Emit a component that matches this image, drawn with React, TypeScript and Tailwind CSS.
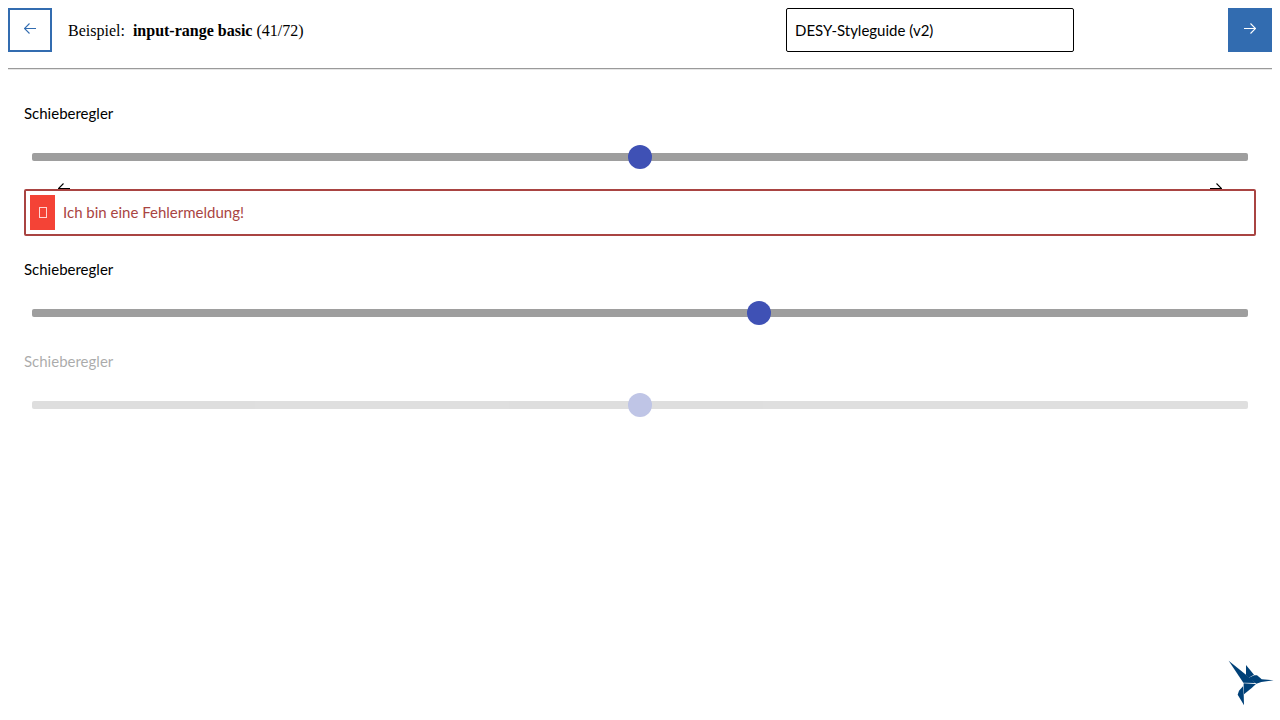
import { useId, useState } from "react";

function ArrowLeft({ className = "" }: { className?: string }) {
  return (
    <svg viewBox="0 0 12 11" className={`h-[11px] w-3 ${className}`} fill="none" stroke="currentColor" aria-hidden="true">
      <path d="M0.5 5.5H12" />
      <path d="M5.5 0.5L0.5 5.5L5.5 10.5" strokeWidth="1.1" />
    </svg>
  );
}

function ArrowRight({ className = "" }: { className?: string }) {
  return (
    <svg viewBox="0 0 12 11" className={`h-[11px] w-3 ${className}`} fill="none" stroke="currentColor" aria-hidden="true">
      <path d="M0 5.5H11.5" />
      <path d="M6.5 0.5L11.5 5.5L6.5 10.5" strokeWidth="1.1" />
    </svg>
  );
}

function Hummingbird() {
  return (
    <svg viewBox="0 0 180 180" className="size-[60px]" fill="#004178" aria-hidden="true">
      <path d="M26 26L78 68L106 93L70 92L58 74Z" />
      <path d="M78 39L102 68L86 77L78 69Z" />
      <path d="M85 78L103 70L111 70L120 77L125 82L161 85L124 90L109 95Z" />
      <path d="M71 94L108 96L95 108L72 127Z" />
      <path d="M69 94L71 124L72 160L64 146L53 128L57 116L69 103Z" />
    </svg>
  );
}

type SliderProps = {
  label: string;
  initial: number;
  disabled?: boolean;
  arrows?: boolean;
};

function Slider({ label, initial, disabled = false, arrows = false }: SliderProps) {
  const id = useId();
  const [value, setValue] = useState(initial);
  return (
    <div className={disabled ? "opacity-33" : ""}>
      <label htmlFor={id} className="block leading-6">
        {label}
      </label>
      <div className="relative mx-2 mt-5">
        <input
          id={id}
          type="range"
          min={0}
          max={100}
          value={value}
          disabled={disabled}
          onChange={(e) => setValue(Number(e.target.value))}
          className="block h-6 w-full appearance-none bg-transparent [&::-webkit-slider-runnable-track]:h-2 [&::-webkit-slider-runnable-track]:rounded-xs [&::-webkit-slider-runnable-track]:bg-[#9e9e9e] [&::-webkit-slider-thumb]:-mt-2 [&::-webkit-slider-thumb]:size-6 [&::-webkit-slider-thumb]:appearance-none [&::-webkit-slider-thumb]:rounded-full [&::-webkit-slider-thumb]:bg-[#3f51b5]"
        />
        {arrows && (
          <div className="absolute inset-x-0 top-[38px] flex justify-between px-[26px]">
            <ArrowLeft />
            <ArrowRight />
          </div>
        )}
      </div>
    </div>
  );
}

export default function App() {
  return (
    <div className="min-h-screen bg-white p-2 font-['Lato','Noto_Sans',sans-serif] text-[15px] text-black">
      <header className="flex items-center">
        <button aria-label="Zurück" className="flex size-11 items-center justify-center border-2 border-[#326cb0] pb-[3px] text-[#326cb0]">
          <ArrowLeft />
        </button>
        <p className="ml-4 pt-0.5 font-['Liberation_Serif',serif] text-base">
          Beispiel:&nbsp; <b>input-range basic</b> (41/72)
        </p>
        <select
          aria-label="Styleguide"
          className="mr-[154px] ml-auto h-11 w-72 appearance-none rounded-xs border border-black bg-white px-2"
        >
          <option>DESY-Styleguide (v2)</option>
        </select>
        <button aria-label="Weiter" className="flex size-11 items-center justify-center bg-[#326cb0] pb-[3px] text-white">
          <ArrowRight />
        </button>
      </header>
      <hr className="mt-4 h-0.5 border-t border-b border-t-[#9a9a9a] border-b-[#e6e6e6]" />

      <main className="px-4 pt-[31px]">
        <Slider label="Schieberegler" initial={50} arrows />
        <div role="alert" className="relative mt-5 mb-[21px] flex items-stretch gap-2 rounded-xs border-2 border-[#a94442] bg-white p-1 text-[#a94442]">
          <span className="flex h-[35px] w-[25px] items-center justify-center bg-[#f44336]">
            <span className="h-[11px] w-2 border border-[#ffd5d2]" />
          </span>
          <span className="self-center">Ich bin eine Fehlermeldung!</span>
        </div>
        <div className="flex flex-col gap-6">
          <Slider label="Schieberegler" initial={60} />
          <Slider label="Schieberegler" initial={50} disabled />
        </div>
      </main>

      <a href="#top" aria-label="Styleguide" className="fixed right-0 bottom-2">
        <Hummingbird />
      </a>
    </div>
  );
}
